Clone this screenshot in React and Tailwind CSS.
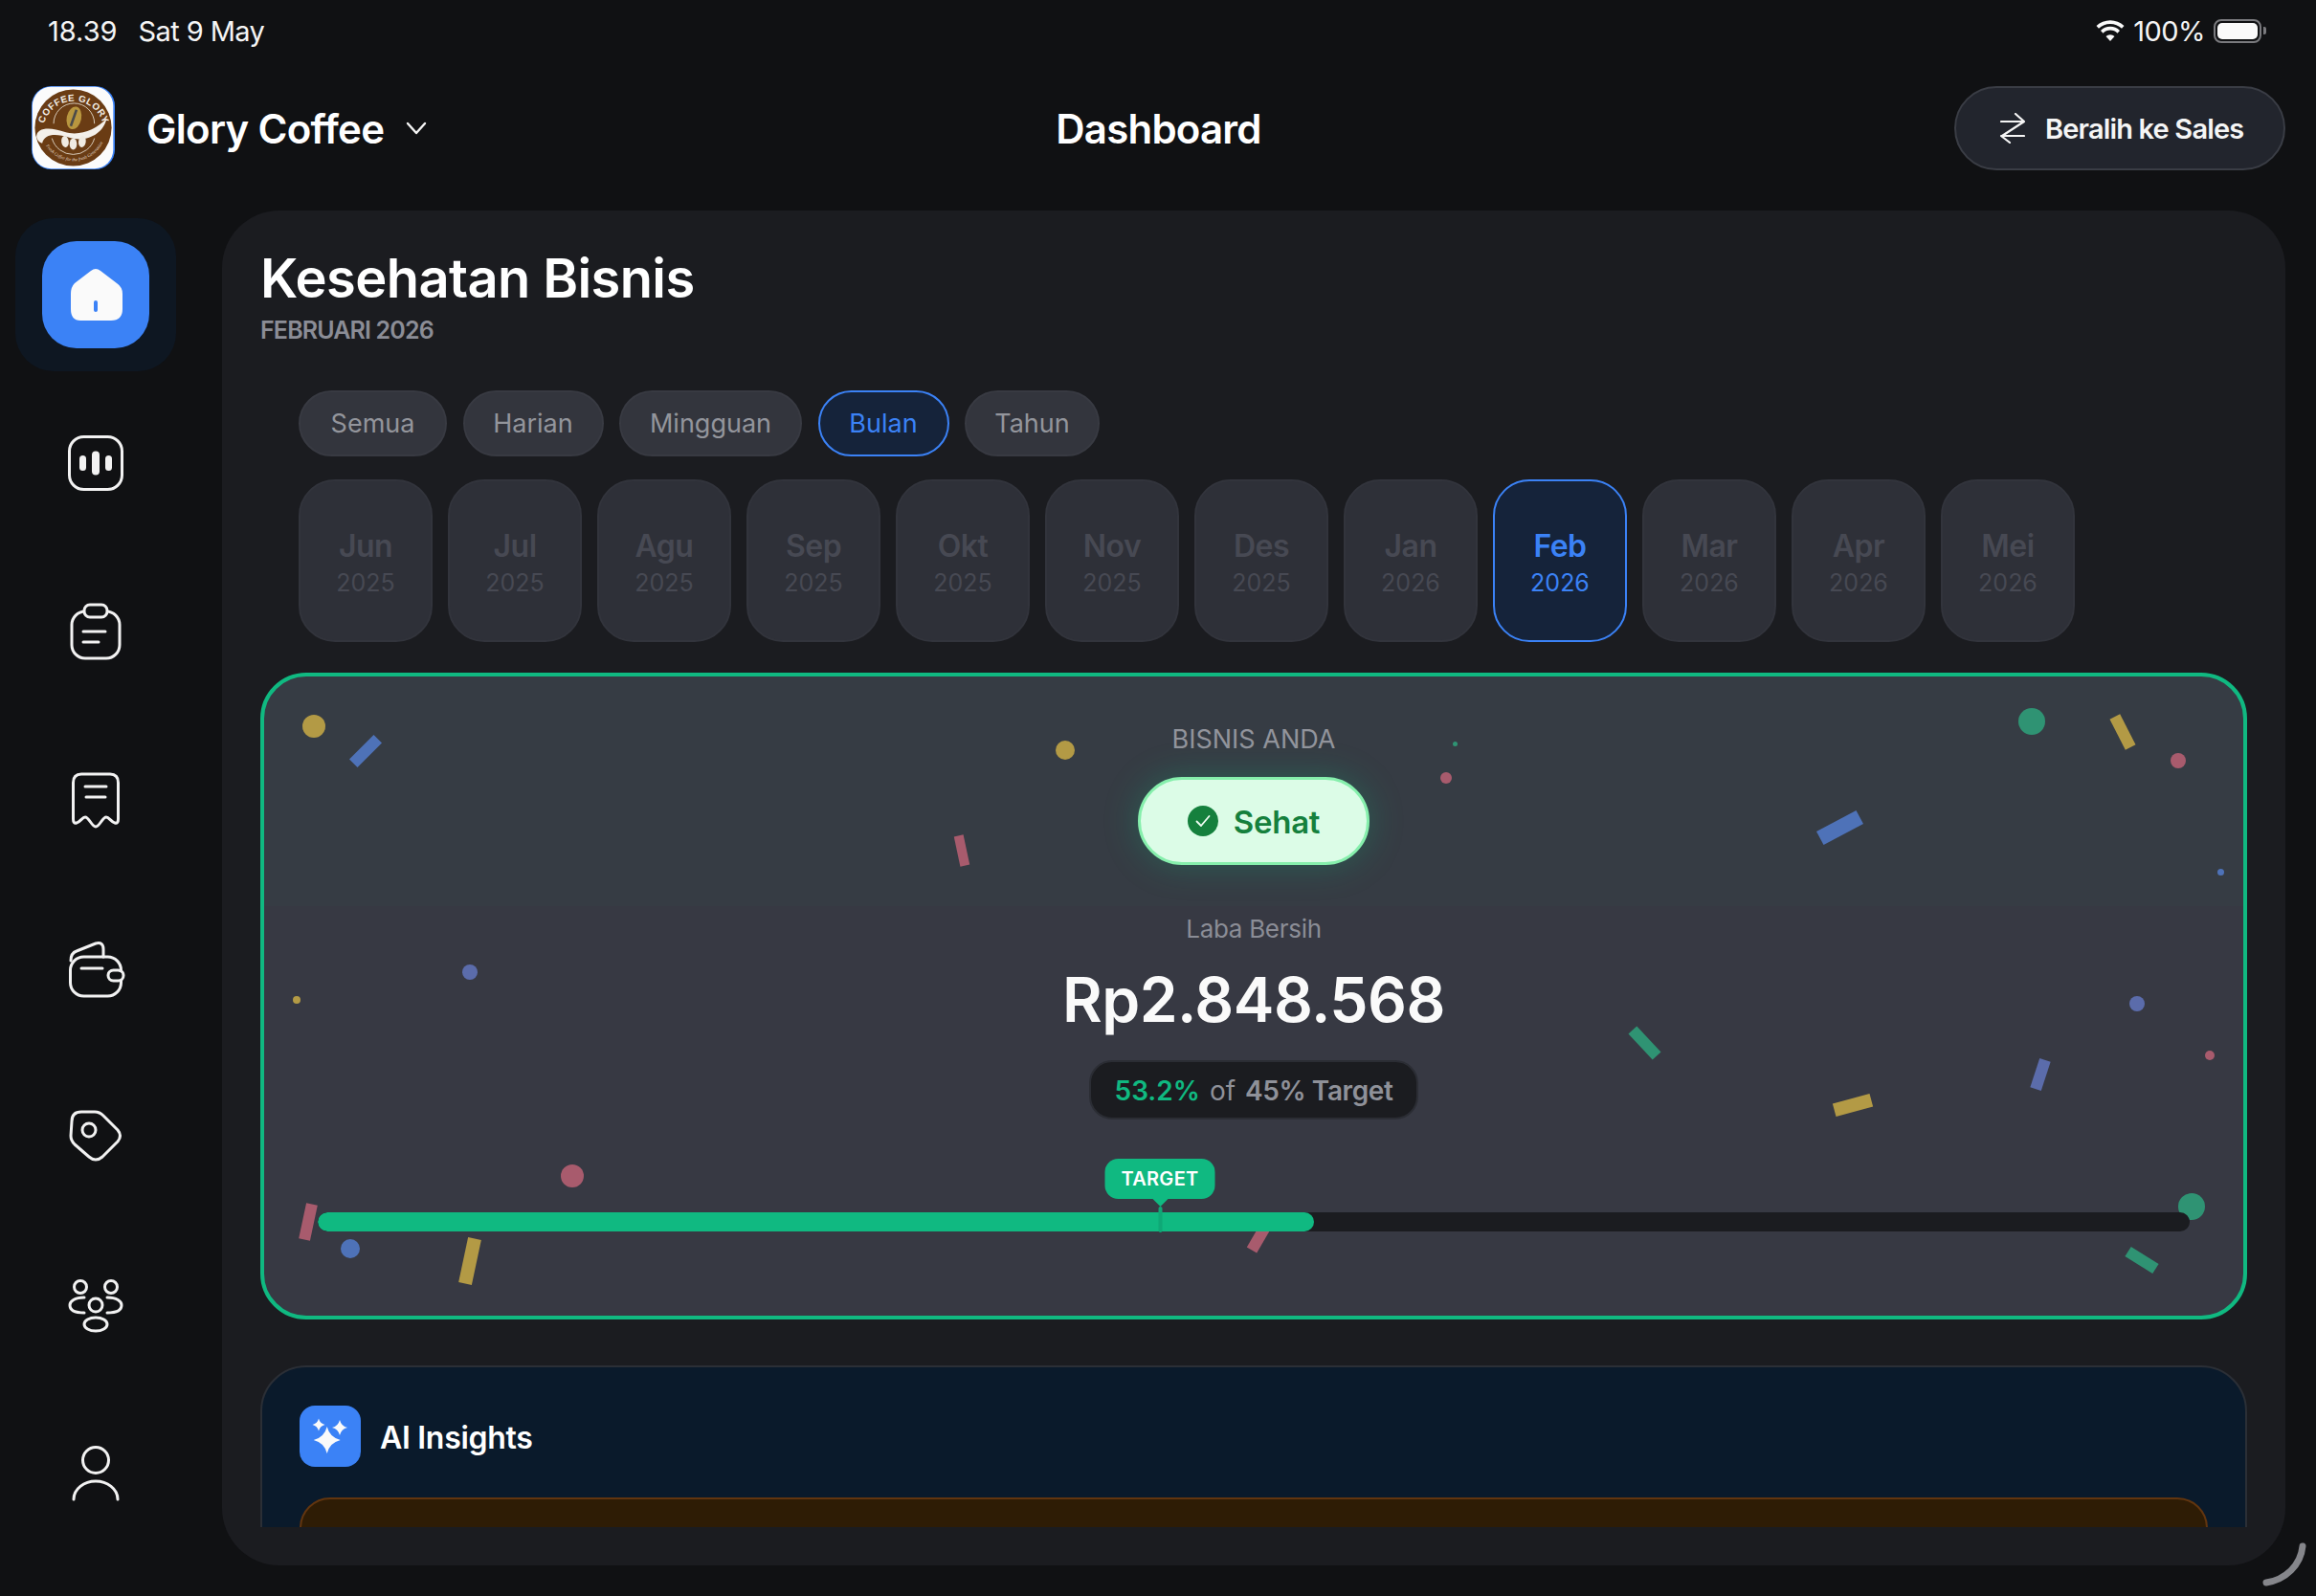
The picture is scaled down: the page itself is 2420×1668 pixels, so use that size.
import * as React from "react";

const filters = [
	{ label: "Semua", width: "w-[155px]" },
	{ label: "Harian", width: "w-[147px]" },
	{ label: "Mingguan", width: "w-[191px]" },
	{ label: "Bulan", width: "w-[137px]", active: true },
	{ label: "Tahun", width: "w-[141px]" },
];

const months = [
	["Jun", "2025"], ["Jul", "2025"], ["Agu", "2025"], ["Sep", "2025"],
	["Okt", "2025"], ["Nov", "2025"], ["Des", "2025"], ["Jan", "2026"],
	["Feb", "2026"], ["Mar", "2026"], ["Apr", "2026"], ["Mei", "2026"],
];

const Y = "#b39a45", B = "#4e72b8", G = "#2f9373", R = "#a85b6d", I = "#5b6cab";

// confetti: centre x, y inside the card, size, colour
const dots = [
	[52, 52, 24, Y], [837, 77, 20, Y], [215, 309, 16, I], [34, 338, 8, Y],
	[322, 522, 24, R], [90, 598, 20, B], [1244, 70, 5, G], [1235, 106, 12, R],
	[1847, 47, 28, G], [2000, 88, 16, R], [2044, 204, 7, B], [1957, 342, 16, I],
	[2033, 396, 10, R], [2014, 554, 28, G],
];
const strips = [
	[106, 78, 36, 12, -45, B], [729, 182, 10, 32, -12, R], [46, 570, 12, 38, 12, R],
	[215, 611, 14, 48, 12, Y], [1041, 584, 12, 36, 30, R], [1942, 58, 12, 36, -27, Y],
	[1646, 158, 47, 16, -28, B], [1442, 383, 37, 12, 47, G], [1660, 448, 40, 14, -15, Y],
	[1856, 416, 12, 32, 18, I], [1962, 610, 34, 12, 32, G],
];

const iconProps = {
	width: 64, height: 64, viewBox: "0 0 64 64", fill: "none",
	stroke: "#f2f2f2", strokeWidth: 3, strokeLinecap: "round", strokeLinejoin: "round",
};

function HomeIcon() {
	return (
		<svg width="64" height="64" viewBox="0 0 64 64">
			<path d="M27 7 Q32 3 37 7 L54 20 Q60 24 60 31 V47 Q60 59 48 59 H16 Q6 59 6 47 V31 Q6 24 10 20 Z" fill="#fafafa" />
			<rect x="30" y="38" width="4" height="12" rx="2" fill="#3b82f6" />
		</svg>
	);
}

function ChartIcon() {
	return (
		<svg {...iconProps}>
			<rect x="4.5" y="4.5" width="55" height="55" rx="15" />
			<rect x="15" y="24" width="7" height="16" rx="3.5" fill="#f2f2f2" stroke="none" />
			<rect x="28" y="19.5" width="8" height="25" rx="4" fill="#f2f2f2" stroke="none" />
			<rect x="42" y="24" width="7" height="16" rx="3.5" fill="#f2f2f2" stroke="none" />
		</svg>
	);
}

function ClipboardIcon() {
	return (
		<svg {...iconProps}>
			<rect x="7" y="11" width="50" height="49" rx="14" />
			<rect x="20" y="4" width="24" height="13" rx="6" fill="#101214" />
			<path d="M19 32 H42 M19 43 H35" />
		</svg>
	);
}

function ReceiptIcon() {
	return (
		<svg {...iconProps}>
			<path d="M8.5 14 Q8.5 5 17 5 H47 Q55.5 5 55.5 14 V52 Q55.5 57 52 56 C48 55 46 50 43 50 C39 50 36 60 32 60 C28 60 25 50 21 50 C18 50 16 55 12 56 Q8.5 57 8.5 52 Z" />
			<path d="M21 18 H43 M22 29 H42" />
		</svg>
	);
}

function WalletIcon() {
	return (
		<svg {...iconProps}>
			<path d="M6 24 Q6 16 12 14 L32 6 Q40 4 40 12 V20" />
			<rect x="5.5" y="20" width="53" height="41" rx="14" />
			<rect x="45" y="34" width="16" height="11" rx="5.5" fill="#101214" />
			<path d="M17 32 H39" />
		</svg>
	);
}

function TagIcon() {
	return (
		<svg {...iconProps}>
			<path d="M7 16 Q7 6 17 6 H31 Q36 6 40 10 L55 25 Q60 31 55 37 L39 53 Q32 59 25 53 L10 40 Q6 36 6 31 Z" />
			<circle cx="25" cy="25" r="7" />
		</svg>
	);
}

function TeamIcon() {
	return (
		<svg {...iconProps}>
			<circle cx="16" cy="13" r="6.5" />
			<circle cx="48" cy="13" r="6.5" />
			<circle cx="32" cy="32" r="7" />
			<path d="M20 24 C10 24 5 28 5 32 C5 37 10 40 20 40" />
			<path d="M44 24 C54 24 59 28 59 32 C59 37 54 40 44 40" />
			<ellipse cx="32" cy="52" rx="12" ry="7" />
		</svg>
	);
}

function UserIcon() {
	return (
		<svg {...iconProps}>
			<circle cx="32" cy="18" r="13.5" />
			<path d="M9 59 C9 48 20 40 32 40 C44 40 55 48 55 59" />
		</svg>
	);
}

function Logo() {
	return (
		<svg width="87" height="87" viewBox="0 0 102 102" className="shrink-0">
			<rect x="0" y="0" width="102" height="102" rx="24" fill="#3b82f6" />
			<rect x="1" y="1" width="99" height="100" rx="23" fill="#fbfbfb" />
			<circle cx="51" cy="51" r="47" fill="#6a3c14" />
			<path id="logoArc" d="M14 56 A37.5 37.5 0 0 1 89 56" fill="none" />
			<text fontFamily="'Liberation Sans',sans-serif" fontSize="11.5" fontWeight="700" fill="#f3efe8" letterSpacing="0.6">
				<textPath href="#logoArc" startOffset="50%" textAnchor="middle">COFFEE GLORY</textPath>
			</text>
			<path d="M27 46 A25 25 0 0 1 77 46" fill="none" stroke="#e8e0d4" strokeWidth="1" />
			<ellipse cx="52" cy="39" rx="9" ry="14" fill="#b8963f" transform="rotate(12 52 39)" />
			<path d="M48 49 L55 29" stroke="#4a4a4a" strokeWidth="3" />
			<path d="M6 62 C6 50 24 50 40 56 C58 62 78 54 92 40 C88 58 68 70 46 63 C30 58 16 58 13 70 Q7 68 6 62 Z" fill="#f4f0ea" />
			<path d="M25 64 A27 27 0 0 0 77 64" fill="none" stroke="#e8e0d4" strokeWidth="1" />
			<ellipse cx="41" cy="68" rx="4.5" ry="7" fill="#f0ebe2" transform="rotate(-8 41 68)" />
			<ellipse cx="51" cy="71" rx="4.5" ry="7" fill="#f0ebe2" />
			<ellipse cx="62" cy="68" rx="4.5" ry="7" fill="#f0ebe2" transform="rotate(8 62 68)" />
			<path id="logoFoot" d="M14 66 A40 40 0 0 0 90 62" fill="none" />
			<text fontFamily="'Liberation Serif',serif" fontSize="5.6" fontStyle="italic" fill="#e4dccd">
				<textPath href="#logoFoot" startOffset="50%" textAnchor="middle">Fresh Coffee for the fresh Generation</textPath>
			</text>
		</svg>
	);
}

function SwapIcon() {
	return (
		<svg width="26" height="32" viewBox="0 0 26 32" fill="none" stroke="#f5f5f5" strokeWidth="2.2" strokeLinecap="round" strokeLinejoin="round">
			<path d="M1 9 H25 M16 1 L25 9 L2 24" />
			<path d="M25 24 H1 L10 31" />
		</svg>
	);
}

function SparkIcon() {
	const star = (x, y, r) => {
		const k = r * 0.2;
		return `M${x} ${y - r} Q${x + k} ${y - k} ${x + r} ${y} Q${x + k} ${y + k} ${x} ${y + r} Q${x - k} ${y + k} ${x - r} ${y} Q${x - k} ${y - k} ${x} ${y - r} Z`;
	};
	return (
		<svg width="64" height="64" viewBox="0 0 64 64">
			<path d={star(28.7, 36, 14)} fill="#fafafa" />
			<path d={star(20, 20, 6.5)} fill="#fafafa" />
			<path d={star(42, 23, 8)} fill="#fafafa" />
		</svg>
	);
}

const navIcons = [ChartIcon, ClipboardIcon, ReceiptIcon, WalletIcon, TagIcon, TeamIcon, UserIcon];

export default function App() {
	return (
		<div className="relative flex h-[1668px] w-[2420px] flex-col overflow-hidden bg-[#101113] text-white [font-family:Inter,sans-serif]">
			{/* Status bar */}
			<div className="flex h-[64px] items-center justify-between pl-[50px] pr-[52px] text-[29px] leading-none text-[#f5f5f5]">
				<div className="flex gap-[22px]">
					<span>18.39</span>
					<span className="tracking-[-0.6px]">Sat 9 May</span>
				</div>
				<div className="flex items-center">
					<svg width="30" height="22" viewBox="0 0 30 22" fill="#fafafa">
						<path d="M15 22 L10.5 17 A6.5 6.5 0 0 1 19.5 17 Z" />
						<path d="M7.5 13.8 L5 11 A14 14 0 0 1 25 11 L22.5 13.8 A10.4 10.4 0 0 0 7.5 13.8 Z" />
						<path d="M3 8.8 L0.5 6 A21 21 0 0 1 29.5 6 L27 8.8 A17.5 17.5 0 0 0 3 8.8 Z" />
					</svg>
					<span className="ml-[9px] tracking-[-0.5px]">100%</span>
					<div className="ml-[9px] flex items-center">
						<div className="h-[25px] w-[50px] rounded-[8px] border-2 border-[#7a7a7e] p-[2px]">
							<div className="h-full w-full rounded-[5px] bg-[#fafafa]" />
						</div>
						<div className="ml-[2px] h-[8px] w-[3px] rounded-r-[2px] bg-[#7a7a7e]" />
					</div>
				</div>
			</div>

			{/* Header */}
			<div className="grid h-[156px] grid-cols-[1fr_auto_1fr] items-start pl-[33px] pr-[32px] pt-[26px]">
				<div className="flex h-[87px] items-center">
					<Logo />
					<span className="ml-[33px] pt-[2px] text-[42px] font-semibold leading-none tracking-[-0.7px]">Glory Coffee</span>
					<svg className="ml-[23px]" width="22" height="14" viewBox="0 0 22 14" fill="none" stroke="#f5f5f5" strokeWidth="2.4" strokeLinecap="round" strokeLinejoin="round">
						<path d="M2 2 L11 12 L20 2" />
					</svg>
				</div>
				<div className="flex h-[87px] items-center pt-[2px] text-[42px] font-semibold leading-none tracking-[-0.8px]">Dashboard</div>
				<div className="flex justify-end">
					<button className="flex h-[88px] w-[346px] items-center rounded-full border-2 border-[#3a3d45] bg-[#22252d] pl-[46px]">
						<SwapIcon />
						<span className="ml-[21px] pt-[2px] text-[29px] font-semibold tracking-[-0.85px] text-[#f5f5f5]">Beralih ke Sales</span>
					</button>
				</div>
			</div>

			<div className="flex flex-1">
				{/* Sidebar */}
				<div className="relative w-[232px] pl-[16px]">
					<div className="flex h-[176px] w-[168px] items-center justify-center">
						<div className="flex h-[160px] w-[168px] items-center justify-center rounded-[40px] bg-[#0e1722]">
							<div className="flex h-[112px] w-[112px] items-center justify-center rounded-[36px] bg-[#3b82f6]">
								<HomeIcon />
							</div>
						</div>
					</div>
					{navIcons.map((Icon, i) => (
						<div key={i} className="flex h-[176px] w-[168px] items-center justify-center">
							<Icon />
						</div>
					))}
				</div>

				{/* Main panel */}
				<div className="h-[1416px] w-[2156px] rounded-[60px] bg-[#1b1c20]">
					<div className="h-[1376px] overflow-hidden px-[40px] pt-[36px]">
						<h1 className="text-[56px] font-semibold leading-[70px] tracking-[-0.6px]">Kesehatan Bisnis</h1>
						<p className="mt-[3px] text-[25px] font-semibold leading-[32px] tracking-[-0.85px] text-[#8b8d96]">FEBRUARI 2026</p>

						<div className="ml-[40px] mt-[47px] flex gap-[16.5px]">
							{filters.map((f) => (
								<div
									key={f.label}
									className={`flex h-[69px] items-center justify-center rounded-full border-2 pt-[2px] text-[27px] ${f.width} ${f.active ? "border-[#3b82f6] bg-[#15233a] text-[#3b82f6]" : "border-[#383a42] bg-[#33353d] text-[#93959c]"}`}
								>
									{f.label}
								</div>
							))}
						</div>

						<div className="ml-[40px] mt-[24px] flex gap-[16px]">
							{months.map(([m, y]) => {
								const on = m === "Feb";
								return (
									<div
										key={m}
										className={`flex h-[170px] w-[140px] flex-col items-center justify-center rounded-[38px] border-2 pt-[3px] ${on ? "border-[#3b82f6] bg-[#15233a]" : "border-[#32343c] bg-[#2e3038]"}`}
									>
										<span className={`text-[32px] font-semibold leading-[40px] tracking-[-0.5px] ${on ? "text-[#3b82f6]" : "text-[#474953]"}`}>{m}</span>
										<span className={`mt-[3px] text-[25px] leading-[30px] ${on ? "text-[#3b82f6]" : "text-[#474953]"}`}>{y}</span>
									</div>
								);
							})}
						</div>

						{/* Health card */}
						<div className="relative mt-[32px] h-[676px] overflow-hidden rounded-[48px] border-[4px] border-[#10b981] bg-[linear-gradient(#363c44_240px,#373943_240px)]">
							{dots.map(([x, y, d, c], i) => (
								<div key={i} className="absolute rounded-full" style={{ left: x - d / 2, top: y - d / 2, width: d, height: d, backgroundColor: c }} />
							))}
							{strips.map(([x, y, w, h, r, c], i) => (
								<div key={i} className="absolute" style={{ left: x - w / 2, top: y - h / 2, width: w, height: h, backgroundColor: c, transform: `rotate(${r}deg)` }} />
							))}

							<div className="relative flex flex-col items-center pt-[50px]">
								<p className="text-[27px] leading-[32px] text-[#92949c]">BISNIS ANDA</p>
								<div className="mt-[23px] flex h-[92px] w-[242px] items-center justify-center rounded-full border-[3px] border-[#86efac] bg-[#dcfce7] shadow-[0_0_36px_rgba(16,185,129,0.28)]">
									<svg width="32" height="32" viewBox="0 0 32 32">
										<circle cx="16" cy="16" r="16" fill="#15803d" />
										<path d="M9.5 16.5 L14 21 L22.5 11" fill="none" stroke="#f0fdf4" strokeWidth="1.8" strokeLinecap="round" strokeLinejoin="round" />
									</svg>
									<span className="ml-[16px] pt-[3px] text-[33px] font-semibold tracking-[-0.3px] text-[#15803d]">Sehat</span>
								</div>
								<p className="mt-[51px] text-[26px] leading-[32px] tracking-[-0.3px] text-[#8b8d96]">Laba Bersih</p>
								<p className="mt-[18px] text-[64px] font-semibold leading-[80px] tracking-[-0.5px] text-[#fafafa]">Rp2.848.568</p>
								<div className="mt-[23px] flex h-[62px] w-[344px] items-center justify-center rounded-[24px] border-2 border-[#2b2d34] bg-[#1b1c20] pt-[1px] text-[28px] leading-none text-[#8f9199]">
									<span className="font-semibold text-[#10b981]">53.2%</span>
									<span className="ml-[10px]">of</span>
									<span className="ml-[10px] font-semibold tracking-[-0.4px]">45% Target</span>
								</div>

								<div className="relative mt-[41px] h-[76px] w-[1956px] pt-[56px]">
									<div className="h-[20px] overflow-hidden rounded-full bg-[#1b1c20]">
										<div className="h-full w-[53.2%] rounded-full bg-[#10b981]" />
									</div>
									<div className="absolute left-[880px] top-0 flex -translate-x-1/2 flex-col items-center">
										<div className="flex h-[42px] w-[115px] items-center justify-center rounded-[14px] bg-[#10b981] text-[20px] font-semibold tracking-[0.3px] text-white">TARGET</div>
										<div className="h-0 w-0 border-x-[8px] border-t-[8px] border-x-transparent border-t-[#10b981]" />
										<div className="h-[27px] w-[4px] rounded-full bg-[#0fa876]" />
									</div>
								</div>
							</div>
						</div>

						{/* AI Insights */}
						<div className="mt-[48px] h-[300px] rounded-[48px] border-2 border-[#2b2f36] bg-[#0a1a2b] px-[39px] pt-[40px]">
							<div className="flex items-center">
								<div className="flex h-[64px] w-[64px] items-center justify-center rounded-[16px] bg-[#3b82f6]">
									<SparkIcon />
								</div>
								<span className="ml-[20px] pt-[3px] text-[32px] font-semibold tracking-[-0.3px]">AI Insights</span>
							</div>
							<div className="mt-[32px] h-[200px] rounded-[32px] border-2 border-[#62350f] bg-[#2e1c05]" />
						</div>
					</div>
				</div>
			</div>

			{/* corner gesture mark */}
			<svg className="absolute bottom-[10px] right-[10px]" width="46" height="46" viewBox="0 0 46 46" fill="none">
				<path d="M42 4 C40 24 24 39 4 42" stroke="#85868b" strokeWidth="7" strokeLinecap="round" />
			</svg>
		</div>
	);
}
